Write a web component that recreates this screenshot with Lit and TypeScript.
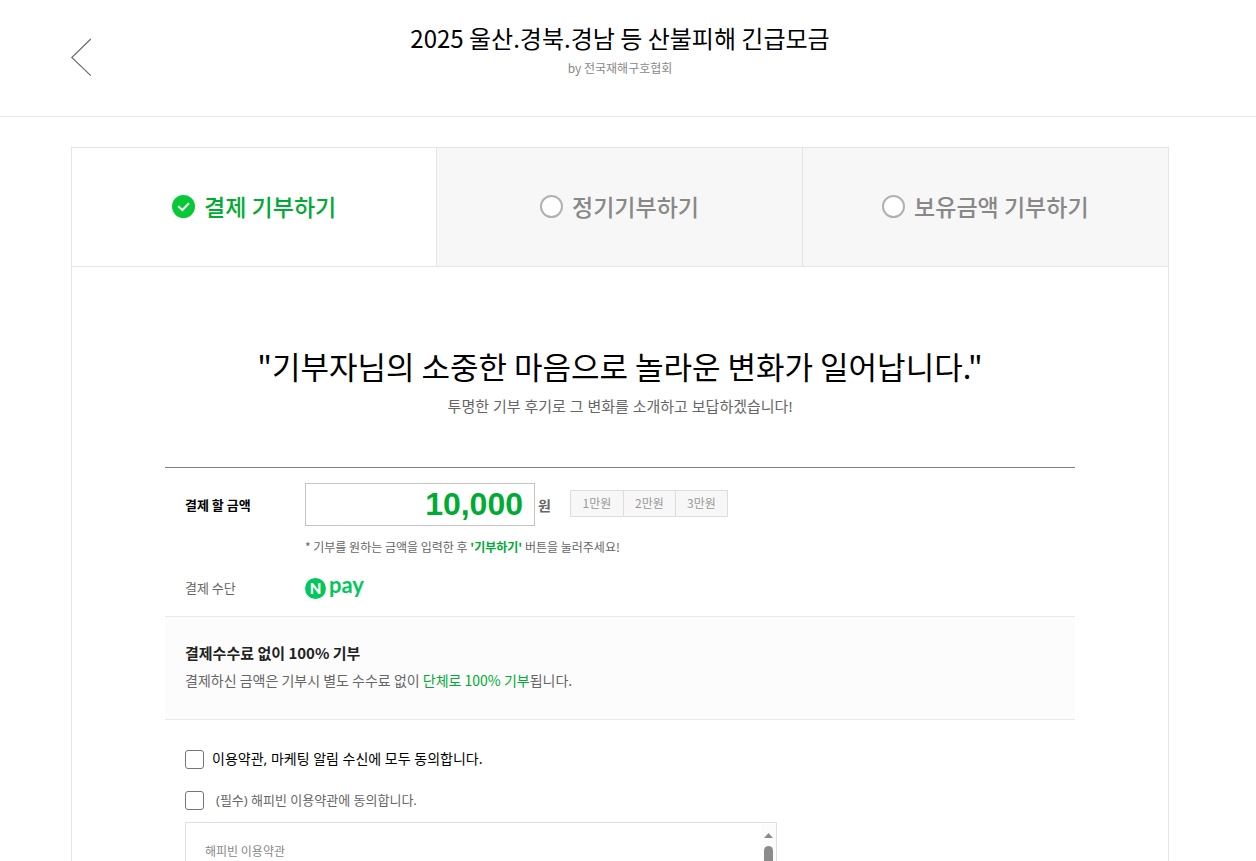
import { LitElement, html, css } from "lit";
import { customElement, state } from "lit/decorators.js";

interface DonationMode {
  id: string;
  label: string;
}

const MODES: DonationMode[] = [
  { id: "once", label: "결제 기부하기" },
  { id: "regular", label: "정기기부하기" },
  { id: "balance", label: "보유금액 기부하기" },
];

const PRESETS = [1, 2, 3];

@customElement("app-root")
export class AppRoot extends LitElement {
  @state() private mode = "once";
  @state() private amount = "10,000";

  static styles = css`
    :host {
      display: block;
      height: 100vh;
      overflow: hidden;
      background: #fff;
      color: #666;
      font-family: "Noto Sans CJK KR", "Noto Sans", sans-serif;
      font-size: 13px;
      line-height: 20px;
    }
    *,
    *::before,
    *::after {
      box-sizing: border-box;
    }
    h1,
    h2,
    h3,
    p,
    fieldset {
      margin: 0;
      padding: 0;
      border: 0;
      min-width: 0;
    }
    input,
    button {
      margin: 0;
      font-family: inherit;
    }
    .header {
      display: grid;
      grid-template-columns: 40px 1fr 40px;
      padding: 20px 87px 0 71px;
      height: 117px;
      border-bottom: 1px solid #e9e9e9;
    }
    .back {
      margin-top: 18px;
      height: 40px;
    }
    .back svg {
      display: block;
    }
    .heading {
      text-align: center;
    }
    .title {
      color: #000;
      font-size: 24px;
      line-height: 36px;
      font-weight: 400;
    }
    .by {
      color: #888;
      font-size: 12px;
      line-height: 24px;
    }
    .main {
      margin: 30px 87px 0 71px;
      border: 1px solid #e5e5e5;
    }
    .modes {
      display: grid;
      grid-template-columns: repeat(3, 1fr);
      border-bottom: 1px solid #e5e5e5;
    }
    .mode {
      display: flex;
      align-items: center;
      justify-content: center;
      gap: 9px;
      height: 118px;
      padding-bottom: 2px;
      border-right: 1px solid #e5e5e5;
      background: #f7f7f7;
      color: #888;
      font-size: 23px;
      line-height: 32px;
      font-weight: 500;
      cursor: pointer;
    }
    .mode:last-child {
      border-right: 0;
    }
    .mode.on {
      background: #fff;
      color: #00ab33;
    }
    .dot {
      display: grid;
    }
    .dot > * {
      grid-area: 1 / 1;
    }
    .radio {
      appearance: none;
      width: 23px;
      height: 23px;
      border: 2px solid #b1b1b1;
      border-radius: 50%;
      background: #fff;
    }
    .radio:checked {
      border-color: #07c937;
      background: #07c937;
    }
    .tick {
      pointer-events: none;
    }
    .content {
      max-width: 910px;
      margin: 0 auto;
    }
    .slogan {
      padding: 75px 0 50px;
      text-align: center;
    }
    .slogan-title {
      color: #000;
      font-size: 31px;
      line-height: 48px;
      font-weight: 400;
    }
    .slogan-text {
      margin-top: 5px;
      font-family: "Noto Sans", "Noto Sans CJK KR", sans-serif;
      font-size: 15px;
      line-height: 22px;
    }
    .pay {
      display: grid;
      grid-template-columns: 120px 1fr;
      padding: 15px 20px 13px;
      border-top: 1px solid #808080;
    }
    .amount-label {
      align-self: center;
      color: #000;
      font-weight: 700;
    }
    .amount-row {
      display: flex;
      align-items: center;
    }
    .amount {
      width: 230px;
      height: 43px;
      padding: 0 11px;
      border: 1px solid #c4c4c4;
      border-radius: 0;
      outline: 0;
      color: #00ab33;
      font-family: "Liberation Sans", Arial, sans-serif;
      font-size: 32px;
      font-weight: 700;
      text-align: right;
    }
    .won {
      margin-left: 3px;
      width: 32px;
      font-size: 14px;
      font-weight: 700;
    }
    .presets {
      display: flex;
      margin-bottom: 3px;
      border: 1px solid #ddd;
    }
    .preset {
      width: 52px;
      height: 25px;
      padding: 0;
      border: 0;
      background: #f7f7f7;
      color: #999;
      font-size: 12px;
      line-height: 24px;
    }
    .preset + .preset {
      border-left: 1px solid #ddd;
    }
    .hint {
      grid-column: 2;
      margin-top: 11px;
      font-size: 12px;
    }
    .hint-key {
      color: #00ab33;
      font-weight: 700;
    }
    .method {
      margin-top: 21px;
    }
    .npay {
      display: block;
      margin-top: 14px;
    }
    .npay-text {
      font-family: Lato, sans-serif;
    }
    .notice {
      padding: 25px 20px 28px;
      border-top: 1px solid #e9e9e9;
      border-bottom: 1px solid #e9e9e9;
      background: #fcfcfc;
    }
    .notice-title {
      color: #222;
      font-size: 15px;
      line-height: 22px;
      font-weight: 700;
    }
    .notice-text {
      margin-top: 5px;
      font-size: 14px;
      line-height: 22px;
    }
    .green {
      color: #00ab33;
    }
    .terms {
      padding: 28px 20px 40px;
    }
    .agree {
      display: flex;
      align-items: center;
      gap: 12px;
      height: 22px;
      font-family: "Noto Sans", "Noto Sans CJK KR", sans-serif;
    }
    .agree.all {
      gap: 8px;
      margin-bottom: 19px;
      color: #000;
      font-size: 14px;
    }
    .check {
      width: 19px;
      height: 19px;
      appearance: none;
      border: 1px solid #767676;
      border-radius: 3px;
      background: #fff;
    }
    .check:checked {
      background: #07c937;
    }
    .terms-box {
      display: grid;
      grid-template-columns: 1fr 15px;
      width: 592px;
      max-width: 100%;
      height: 132px;
      margin-top: 11px;
      border: 1px solid #e0e0e0;
    }
    .terms-text {
      padding: 18px 19px;
      color: #888;
      font-size: 12px;
    }
    .scroll {
      display: flex;
      flex-direction: column;
      align-items: center;
      gap: 8px;
      padding-top: 10px;
      background: #fcfcfc;
    }
    .thumb {
      width: 9px;
      height: 60px;
      border-radius: 5px;
      background: #8b8b8b;
    }
  `;

  private renderMode(m: DonationMode) {
    const on = this.mode === m.id;
    return html`<label class="mode ${on ? "on" : ""}">
      <span class="dot">
        <input
          class="radio"
          type="radio"
          name="mode"
          .checked=${on}
          @change=${() => (this.mode = m.id)}
        />
        ${on
          ? html`<svg class="tick" width="23" height="23" viewBox="0 0 23 23" fill="none">
              <path d="M6.2 11.2 L10.4 15 L17 8.3" stroke="#fff" stroke-width="2" />
            </svg>`
          : ""}
      </span>
      <span>${m.label}</span>
    </label>`;
  }

  private setPreset(n: number) {
    this.amount = (n * 10000).toLocaleString("en-US");
  }

  render() {
    return html`
      <header class="header">
        <a class="back" href="#" aria-label="이전">
          <svg width="22" height="40" viewBox="0 0 22 40" fill="none">
            <path d="M19.8 1 L0.8 19.5 L19.8 37.6" stroke="#666" stroke-width="1.1" />
          </svg>
        </a>
        <div class="heading">
          <h1 class="title">2025 울산.경북.경남 등 산불피해 긴급모금</h1>
          <p class="by">by 전국재해구호협회</p>
        </div>
      </header>
      <main class="main">
        <fieldset class="modes">${MODES.map((m) => this.renderMode(m))}</fieldset>
        <div class="content">
          <section class="slogan">
            <h2 class="slogan-title">"기부자님의 소중한 마음으로 놀라운 변화가 일어납니다."</h2>
            <p class="slogan-text">투명한 기부 후기로 그 변화를 소개하고 보답하겠습니다!</p>
          </section>
          <section class="pay">
            <label class="amount-label" for="amount">결제 할 금액</label>
            <div class="amount-row">
              <input
                class="amount"
                id="amount"
                type="text"
                inputmode="numeric"
                .value=${this.amount}
                @change=${(e: Event) => (this.amount = (e.target as HTMLInputElement).value)}
              />
              <span class="won">원</span>
              <div class="presets">
                ${PRESETS.map(
                  (n) => html`<button class="preset" type="button" @click=${() => this.setPreset(n)}>${n}만원</button>`
                )}
              </div>
            </div>
            <p class="hint">
              * 기부를 원하는 금액을 입력한 후 <strong class="hint-key">'기부하기'</strong> 버튼을 눌러주세요!
            </p>
            <span class="method">결제 수단</span>
            <svg class="npay" width="72" height="32" viewBox="0 -6 72 32" role="img" aria-label="N pay">
              <circle cx="10.5" cy="11.5" r="10.5" fill="#03c75a" />
              <text class="npay-text" x="10.5" y="17" text-anchor="middle" font-size="15" font-weight="900" fill="#fff">N</text>
              <text class="npay-text" x="24" y="16" font-size="22" font-weight="700" fill="#03c75a">pay</text>
            </svg>
          </section>
          <section class="notice">
            <h3 class="notice-title">결제수수료 없이 100% 기부</h3>
            <p class="notice-text">
              결제하신 금액은 기부시 별도 수수료 없이 <span class="green">단체로 100% 기부</span>됩니다.
            </p>
          </section>
          <section class="terms">
            <label class="agree all">
              <input class="check" type="checkbox" />
              <span>이용약관, 마케팅 알림 수신에 모두 동의합니다.</span>
            </label>
            <label class="agree">
              <input class="check" type="checkbox" />
              <span>(필수) 해피빈 이용약관에 동의합니다.</span>
            </label>
            <div class="terms-box">
              <div class="terms-text">해피빈 이용약관</div>
              <div class="scroll">
                <svg width="9" height="5" viewBox="0 0 9 5"><path d="M0 5 L4.5 0 L9 5 Z" fill="#8b8b8b" /></svg>
                <div class="thumb"></div>
              </div>
            </div>
          </section>
        </div>
      </main>
    `;
  }
}
